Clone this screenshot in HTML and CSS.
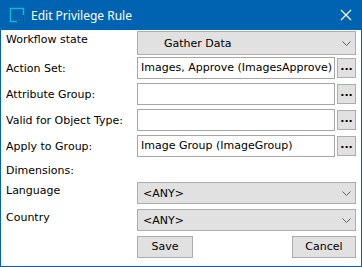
FILE: index.html
```html
<!DOCTYPE html>
<html lang="en">
<head>
    <meta charset="UTF-8">
    <title>Edit Privilege Rule</title>
    <link rel="stylesheet" href="styles.css">
</head>
<body>
    <div class="window">
        <div class="titlebar">
            <svg class="app-icon" width="16" height="16" viewBox="0 0 16 16">
                <rect x="1.5" y="1.5" width="13" height="13" fill="none" stroke="#1fb3cf" stroke-width="1.5"/>
                <path d="M14.5 8 V14.5 H8" fill="none" stroke="#0a4f8a" stroke-width="1.5"/>
            </svg>
            <span class="title">Edit Privilege Rule</span>
            <svg class="close" width="12" height="12" viewBox="0 0 12 12">
                <path d="M1 1 L11 11 M11 1 L1 11" stroke="#ffffff" stroke-width="1.2"/>
            </svg>
        </div>

        <div class="content">
            <div class="row row-top">
                <div class="label">Workflow state</div>
                <div class="combo combo-tall">
                    <span class="combo-text indent">Gather Data</span>
                    <svg class="chevron" width="9" height="5" viewBox="0 0 9 5"><path d="M0.5 0.5 L4.5 4.5 L8.5 0.5" fill="none" stroke="#606060"/></svg>
                </div>
            </div>

            <div class="row field-row">
                <div class="label">Action Set:</div>
                <div class="textbox">Images, Approve (ImagesApprove)</div>
                <div class="dots">...</div>
            </div>
            <div class="row field-row">
                <div class="label">Attribute Group:</div>
                <div class="textbox"></div>
                <div class="dots">...</div>
            </div>
            <div class="row field-row">
                <div class="label">Valid for Object Type:</div>
                <div class="textbox"></div>
                <div class="dots">...</div>
            </div>
            <div class="row field-row">
                <div class="label">Apply to Group:</div>
                <div class="textbox">Image Group (ImageGroup)</div>
                <div class="dots">...</div>
            </div>

            <div class="section-label">Dimensions:</div>

            <div class="row dim-row">
                <div class="label">Language</div>
                <div class="combo">
                    <span class="combo-text">&lt;ANY&gt;</span>
                    <svg class="chevron" width="9" height="5" viewBox="0 0 9 5"><path d="M0.5 0.5 L4.5 4.5 L8.5 0.5" fill="none" stroke="#606060"/></svg>
                </div>
            </div>
            <div class="row dim-row">
                <div class="label">Country</div>
                <div class="combo">
                    <span class="combo-text">&lt;ANY&gt;</span>
                    <svg class="chevron" width="9" height="5" viewBox="0 0 9 5"><path d="M0.5 0.5 L4.5 4.5 L8.5 0.5" fill="none" stroke="#606060"/></svg>
                </div>
            </div>

            <div class="actions">
                <div class="btn btn-save">Save</div>
                <div class="btn btn-cancel">Cancel</div>
            </div>
        </div>
    </div>
</body>
</html>
```

FILE: styles.css
```css
body {
    margin: 0;
    background-color: #ffffff;
    font-family: "DejaVu Sans", sans-serif;
    font-size: 11px;
    color: #000000;
}

.window {
    width: 362px;
    height: 267px;
    box-sizing: border-box;
    border: 1px solid #0063b1;
    border-top: none;
    background-color: #ffffff;
}

.titlebar {
    height: 30px;
    margin: 0 -1px;
    background-color: #0063b1;
    display: flex;
    align-items: center;
    color: #ffffff;
}

.app-icon {
    margin-left: 9px;
}

.title {
    margin-left: 6px;
    font-family: "Noto Sans", sans-serif;
    font-size: 12px;
    flex: 1;
}

.close {
    margin-right: 10px;
}

.content {
    padding: 1px 5px 0 5px;
}

.row {
    display: flex;
}

.label {
    width: 131px;
    flex-shrink: 0;
}

.row-top {
    height: 24px;
}

.row-top .label {
    padding-top: 2px;
}

.combo {
    flex: 1;
    display: flex;
    align-items: center;
    height: 22px;
    box-sizing: border-box;
    border: 1px solid #adadad;
    background-color: #e1e1e1;
    padding: 0 5px;
}

.combo-tall {
    height: 24px;
}

.combo-text {
    flex: 1;
}

.combo-text.indent {
    padding-left: 21px;
}

.chevron {
    margin-right: -1px;
}

.field-row {
    height: 22px;
    margin-top: 3px;
    align-items: center;
}

.row-top + .field-row {
    margin-top: 2px;
}

.field-row .label {
    align-self: center;
}

.textbox {
    width: 198px;
    height: 22px;
    box-sizing: border-box;
    border: 1px solid #a6a6a6;
    padding: 0 3px;
    line-height: 20px;
    white-space: nowrap;
    overflow: hidden;
}

.field-row + .field-row {
    margin-top: 4px;
}

.dots {
    width: 19px;
    height: 20px;
    margin-left: 2px;
    box-sizing: border-box;
    border: 1px solid #adadad;
    background-color: #e1e1e1;
    font-weight: bold;
    text-align: center;
    line-height: 16px;
}

.section-label {
    height: 25px;
    line-height: 27px;
}

.dim-row {
    height: 22px;
    margin-bottom: 5px;
}

.dim-row .label {
    padding-top: 2px;
}

.actions {
    display: flex;
    justify-content: space-between;
    padding-left: 131px;
    margin-top: 1px;
}

.btn {
    height: 22px;
    box-sizing: border-box;
    border: 1px solid #adadad;
    background-color: #e1e1e1;
    text-align: center;
    line-height: 20px;
}

.btn-save {
    width: 56px;
}

.btn-cancel {
    width: 64px;
}
```
